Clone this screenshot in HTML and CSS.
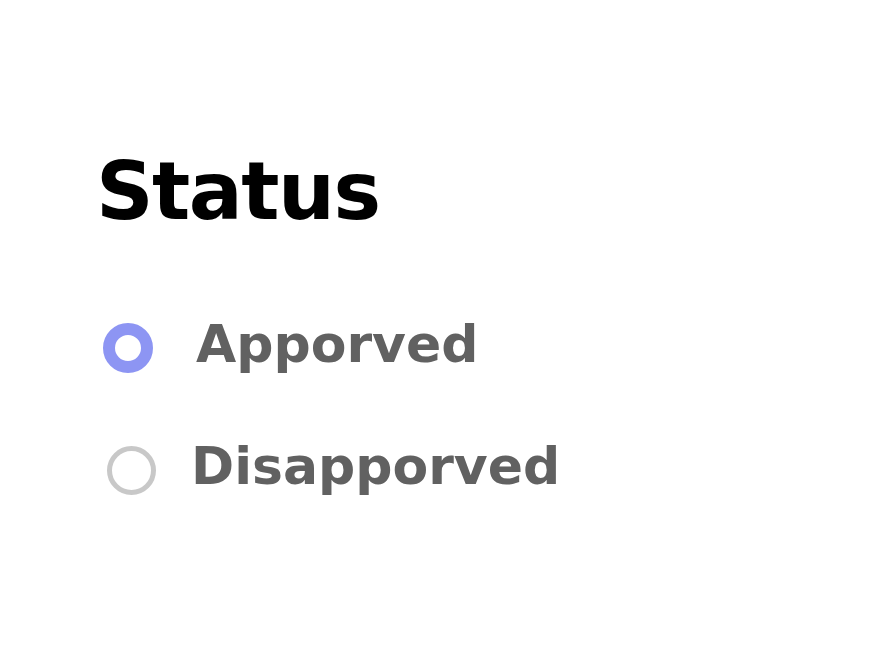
FILE: index.html
```html
<!DOCTYPE html>
<html lang="en">
<head>
  <meta charset="UTF-8" />
  <meta name="viewport" content="width=device-width, initial-scale=1.0"/>
  <title>Status</title>
  <link rel="stylesheet" href="styles.css">
</head>
<body>

<section class="status-panel">
  <h2 class="title">Status</h2>
  <ul class="options">
    <li class="option option-first">
      <span class="radio radio-on"></span>
      <span class="label">Apporved</span>
    </li>
    <li class="option option-second">
      <span class="radio"></span>
      <span class="label">Disapporved</span>
    </li>
  </ul>
</section>

</body>
</html>
```

FILE: styles.css
```css
* {
  margin: 0;
  padding: 0;
  box-sizing: border-box;
}

body {
  font-family: "DejaVu Sans", sans-serif;
  background: #fff;
  min-height: 100vh;
}

.status-panel {
  padding: 142px 0 0 96px;
}

.title {
  font-size: 80px;
  font-weight: bold;
  color: #000;
  letter-spacing: -1.5px;
  line-height: 100px;
}

.options {
  list-style: none;
  display: flex;
  flex-direction: column;
  gap: 52px;
  margin-top: 71px;
}

.option {
  display: flex;
  align-items: center;
  height: 70px;
}

.option-first {
  padding-left: 7px;
  gap: 43px;
}

.option-second {
  padding-left: 11px;
  gap: 35px;
}

.radio {
  width: 49px;
  height: 49px;
  border-radius: 50%;
  border: 5px solid #c8c8c8;
  flex-shrink: 0;
}

.radio-on {
  width: 50px;
  height: 50px;
  border: 12px solid #8d95f3;
}

.label {
  font-size: 52px;
  font-weight: bold;
  color: #616161;
  position: relative;
  top: -4px;
}
```
